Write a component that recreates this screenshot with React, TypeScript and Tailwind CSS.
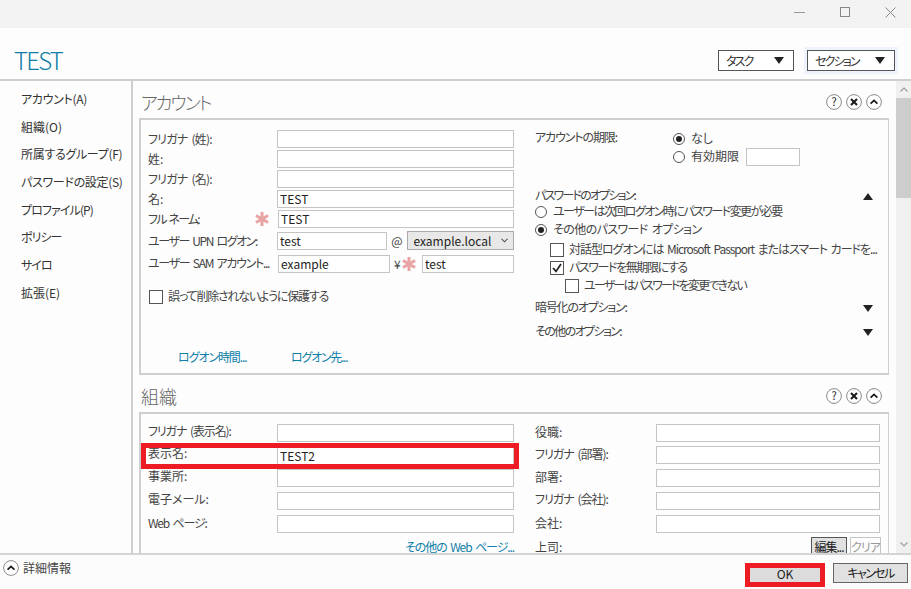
import { ReactNode } from 'react';

function Input({ value, className = '' }: { value?: string; className?: string }) {
  return (
    <div className={`h-[18px] border border-[#c4c4c4] bg-white pl-[2px] text-[12px] leading-[15px] text-[#222] ${className}`}>
      {value}
    </div>
  );
}

function Field({ label, value, star, track = '', className = '' }: { label: string; value?: string; star?: boolean; track?: string; className?: string }) {
  return (
    <div className={`flex h-[18px] items-center ${className}`}>
      <div className={`w-[129px] shrink-0 text-[12px] leading-[18px] whitespace-nowrap ${track}`}>{label}</div>
      {star ? <Star className="-ml-[22px] mr-[9px]" /> : null}
      <Input value={value} className="flex-1" />
    </div>
  );
}

function Star({ className = '' }: { className?: string }) {
  return (
    <svg viewBox="0 0 14 14" className={`h-[14px] w-[14px] shrink-0 ${className}`}>
      <g stroke="#e9a3a3" strokeWidth="3" strokeLinecap="butt">
        <path d="M7 0v14M1 3.5l12 7M13 3.5l-12 7" />
      </g>
    </svg>
  );
}

function Round({ children }: { children: ReactNode }) {
  return (
    <svg viewBox="0 0 16 16" className="h-[16px] w-[16px]">
      <circle cx="8" cy="8" r="7.4" fill="#fff" stroke="#8a8a8a" strokeWidth="1" />
      {children}
    </svg>
  );
}

function UpIcon() {
  return (
    <Round>
      <path d="M4.6 9.6 8 6.4l3.4 3.2" fill="none" stroke="#1a1a1a" strokeWidth="1.8" />
    </Round>
  );
}

function SectionHead({ title, track = '' }: { title: string; track?: string }) {
  return (
    <div className="flex h-[37px] items-center justify-between pt-[5px] pr-[7px] pl-[2px]">
      <div className={`text-[18px] leading-[24px] font-light text-[#666] ${track}`}>{title}</div>
      <div className="flex gap-[4px]">
        <Round>
          <text x="8" y="12" textAnchor="middle" fontSize="11" fill="#222">?</text>
        </Round>
        <Round>
          <path d="M5 5l6 6M11 5l-6 6" stroke="#1a1a1a" strokeWidth="2" />
        </Round>
        <UpIcon />
      </div>
    </div>
  );
}

function Radio({ on, label, track = '', className = '' }: { on?: boolean; label: string; track?: string; className?: string }) {
  return (
    <div className={`flex h-[18px] items-center ${className}`}>
      <div className="flex h-[12px] w-[12px] shrink-0 items-center justify-center rounded-full border border-[#555] bg-white">
        {on ? <div className="h-[6px] w-[6px] rounded-full bg-[#222]" /> : null}
      </div>
      <span className={`ml-[6px] pb-[2px] text-[12px] leading-[18px] whitespace-nowrap ${track}`}>{label}</span>
    </div>
  );
}

function Check({ on, label, track = '', className = '' }: { on?: boolean; label: string; track?: string; className?: string }) {
  return (
    <div className={`flex h-[18px] items-center ${className}`}>
      <div className="h-[14px] w-[14px] shrink-0 border border-[#555] bg-white">
        {on ? (
          <svg viewBox="0 0 12 12" className="h-[12px] w-[12px]">
            <path d="M2 6l3 3.4L10 2" fill="none" stroke="#222" strokeWidth="1.8" />
          </svg>
        ) : null}
      </div>
      <span className={`ml-[5px] pb-[2px] text-[12px] leading-[18px] whitespace-nowrap ${track}`}>{label}</span>
    </div>
  );
}

function Tri({ up }: { up?: boolean }) {
  return (
    <svg viewBox="0 0 10 7" className="h-[7px] w-[10px]">
      <path d={up ? 'M0 7h10L5 0z' : 'M0 0h10L5 7z'} fill="#222" />
    </svg>
  );
}

function OptionRow({ label, up, track = '', className = '' }: { label: string; up?: boolean; track?: string; className?: string }) {
  return (
    <div className={`flex h-[18px] items-center justify-between text-[12px] leading-[18px] ${className}`}>
      <span className={`pb-[3px] ${track}`}>{label}</span>
      <Tri up={up} />
    </div>
  );
}

function HeadButton({ label, className = '' }: { label: string; className?: string }) {
  return (
    <div className={`flex h-[21px] items-center justify-between border border-[#555] bg-white pr-[9px] pl-[7px] text-[12px] text-[#333] ${className}`}>
      <span className="tracking-[-1.8px]">{label}</span>
      <Tri />
    </div>
  );
}

const navItems = [
  { label: 'アカウント(A)', track: 'tracking-[-0.3px]' },
  { label: '組織(O)', track: '' },
  { label: '所属するグループ(F)', track: 'tracking-[-0.3px]' },
  { label: 'パスワードの設定(S)', track: 'tracking-[-0.3px]' },
  { label: 'プロファイル(P)', track: 'tracking-[-0.9px]' },
  { label: 'ポリシー', track: 'tracking-[-1px]' },
  { label: 'サイロ', track: 'tracking-[-1px]' },
  { label: '拡張(E)', track: '' },
];

export default function App() {
  return (
    <div className="flex h-[589px] w-[911px] flex-col overflow-hidden bg-[#fdfdfd] font-['Noto_Sans_CJK_JP','Liberation_Sans',sans-serif] text-[#444] [font-feature-settings:'palt'] [word-spacing:2px]">
      <div className="flex h-[28px] shrink-0 items-center justify-end gap-[35px] bg-[#f3f3f3] pr-[15px] pb-[4px]">
        <div className="h-px w-[11px] bg-[#999]" />
        <div className="h-[10px] w-[10px] border border-[#888]" />
        <svg viewBox="0 0 11 11" className="h-[11px] w-[11px]">
          <path d="M.5.5l10 10M10.5.5l-10 10" stroke="#888" strokeWidth="1" />
        </svg>
      </div>

      <div className="flex h-[53px] shrink-0 items-end justify-between border-b-2 border-[#cfcfcf] pr-[16px] pb-[8px] pl-[14px]">
        <div className="-mb-[5px] text-[24px] leading-[32px] font-light tracking-[-1.8px] text-[#0f7fa8]">TEST</div>
        <div className="flex gap-[13px]">
          <HeadButton label="タスク" className="w-[76px]" />
          <HeadButton label="セクション" className="w-[88px] shadow-[0_0_0_3px_#eef3fd]" />
        </div>
      </div>

      <div className="flex min-h-0 flex-1">
        <div className="w-[133px] shrink-0 border-r-2 border-[#cfcfcf] pt-[4px] pl-[21px]">
          {navItems.map((item) => (
            <div key={item.label} className={`h-[27.7px] text-[12px] leading-[27px] whitespace-nowrap text-[#333] ${item.track}`}>
              {item.label}
            </div>
          ))}
        </div>

        <div className="min-w-0 flex-1 overflow-hidden pl-[6px]">
          <SectionHead title="アカウント" track="tracking-[-2px]" />
          <div className="relative flex h-[257px] w-[751px] border-2 border-[#cfcfcf] pt-[10px] pl-[7px]">
            <div className="w-[366px] shrink-0">
              <div className="flex flex-col gap-[2px]">
                <Field label="フリガナ (姓):" track="tracking-[-0.8px]" />
                <Field label="姓:" />
                <Field label="フリガナ (名):" track="tracking-[-0.8px]" />
                <Field label="名:" value="TEST" />
                <Field label="フル ネーム:" value="TEST" star track="tracking-[-1.8px]" />
              </div>
              <div className="mt-[3px] flex h-[19px] items-center">
                <div className="w-[129px] shrink-0 text-[12px] whitespace-nowrap tracking-[-1.4px]">ユーザー UPN ログオン:</div>
                <Input value="test" className="w-[110px]" />
                <div className="w-[21px] text-center text-[12px]">@</div>
                <div className="flex h-[19px] w-[107px] items-center justify-between border border-[#aaa] bg-[#e8e8e8] pr-[5px] pl-[5px] text-[12px] text-[#222]">
                  <span>example.local</span>
                  <svg viewBox="0 0 8 5" className="h-[5px] w-[7px]">
                    <path d="M.5.5 4 4 7.5.5" fill="none" stroke="#444" strokeWidth="1.2" />
                  </svg>
                </div>
              </div>
              <div className="mt-[5px] flex h-[18px] items-center">
                <div className="w-[130px] shrink-0 pb-[2px] text-[12px] whitespace-nowrap tracking-[-1.3px]">ユーザー SAM アカウント...</div>
                <Input value="example" className="w-[112px]" />
                <div className="ml-[4px] w-[8px] text-[12px]">¥</div>
                <Star />
                <Input value="test" className="ml-[6px] flex-1" />
              </div>
              <Check label="誤って削除されないように保護する" track="tracking-[-1.2px]" className="mt-[15px] ml-[1px]" />
              <div className="mt-[42px] flex pl-[30px] text-[12px] leading-[18px] text-[#0f7fa8]">
                <span className="w-[113px] tracking-[-1.1px]">ログオン時間...</span>
                <span className="tracking-[-1.25px]">ログオン先...</span>
              </div>
            </div>

            <div className="ml-[21px] w-[338px] shrink-0">
              <div className="flex">
                <div className="-mt-[2px] w-[138px] shrink-0 text-[12px] leading-[18px] tracking-[-1.1px]">アカウントの期限:</div>
                <div>
                  <Radio on label="なし" className="h-[16px]" />
                  <div className="flex items-center">
                    <Radio label="有効期限" />
                    <Input className="ml-[7px] w-[54px]" />
                  </div>
                </div>
              </div>
              <OptionRow label="パスワードのオプション:" up track="tracking-[-1.8px]" className="mt-[21px]" />
              <Radio label="ユーザーは次回ログオン時にパスワード変更が必要" track="tracking-[-1.55px]" className="-mt-[2px]" />
              <Radio on label="その他のパスワード オプション" track="tracking-[-0.6px]" />
              <Check label="対話型ログオンには Microsoft Passport またはスマート カードを..." track="tracking-[-1.05px]" className="mt-[2px] ml-[15px]" />
              <Check on label="パスワードを無期限にする" track="tracking-[-1.4px]" className="ml-[15px]" />
              <Check label="ユーザーはパスワードを変更できない" track="tracking-[-1.8px]" className="ml-[30px]" />
              <OptionRow label="暗号化のオプション:" track="tracking-[-1.2px]" className="mt-[4px]" />
              <OptionRow label="その他のオプション:" track="tracking-[-1.6px]" className="mt-[6px]" />
            </div>
          </div>

          <SectionHead title="組織" />
          <div className="flex w-[751px] border-2 border-[#cfcfcf] pt-[10px] pl-[7px]">
            <div className="w-[366px] shrink-0">
              <Field label="フリガナ (表示名):" track="pb-[4px] tracking-[-1.1px]" />
              <div className="relative mt-[5px]">
                <Field label="表示名:" value="TEST2" track="pb-[6px]" />
                <div className="absolute -top-[4px] -right-[5px] -bottom-[4px] -left-[7px] border-[5px] border-[#ed1c24]" />
              </div>
              <Field label="事業所:" track="pb-[4px]" className="mt-[4px]" />
              <Field label="電子メール:" track="pb-[4px]" className="mt-[5px]" />
              <Field label="Web ページ:" track="pb-[2px] tracking-[-1.2px]" className="mt-[5px]" />
              <div className="mt-[5px] text-right text-[12px] leading-[18px] whitespace-nowrap tracking-[-1.1px] text-[#0f7fa8]">その他の Web ページ...</div>
            </div>
            <div className="ml-[21px] w-[345px] shrink-0">
              <Field label="役職:" track="pb-[2px]" className="[&>div:first-child]:w-[121px]" />
              <Field label="フリガナ (部署):" track="pb-[2px] tracking-[-1px]" className="mt-[4px] [&>div:first-child]:w-[121px]" />
              <Field label="部署:" track="pb-[2px]" className="mt-[5px] [&>div:first-child]:w-[121px]" />
              <Field label="フリガナ (会社):" track="pb-[4px] tracking-[-1px]" className="mt-[5px] [&>div:first-child]:w-[121px]" />
              <Field label="会社:" track="pb-[2px]" className="mt-[5px] [&>div:first-child]:w-[121px]" />
              <div className="mt-[4px] -mr-[1px] flex h-[20px] items-center text-[12px]">
                <span className="flex-1">上司:</span>
                <div className="h-[20px] w-[36px] border border-[#555] bg-[#e1e1e1] text-center leading-[18px] tracking-[-1px] whitespace-nowrap text-[#222]">編集...</div>
                <div className="ml-[3px] h-[20px] w-[31px] border border-[#c4c4c4] text-center leading-[18px] tracking-[-1px] whitespace-nowrap text-[#999]">クリア</div>
              </div>
            </div>
          </div>
        </div>

        <div className="ml-[7px] flex w-[15px] shrink-0 flex-col items-center bg-[#f0f0f0]">
          <svg viewBox="0 0 8 5" className="mt-[6px] h-[5px] w-[8px] shrink-0">
            <path d="M.5 4.5 4 1l3.5 3.5" fill="none" stroke="#a0a0a0" strokeWidth="1.2" />
          </svg>
          <div className="mt-[6px] h-[100px] w-full bg-[#cdcdcd]" />
          <svg viewBox="0 0 8 5" className="mt-auto mb-[6px] h-[5px] w-[8px] shrink-0">
            <path d="M.5.5 4 4 7.5.5" fill="none" stroke="#a0a0a0" strokeWidth="1.2" />
          </svg>
        </div>
      </div>

      <div className="flex h-[36px] shrink-0 justify-between border-t-2 border-[#d4d4d4] bg-[#fcfcfc] pr-[3px] pl-[3px]">
        <div className="flex h-[26px] items-center gap-[4px] text-[12px] text-[#444]">
          <UpIcon />
          <span>詳細情報</span>
        </div>
        <div className="flex gap-[8px] pt-[8px]">
          <div className="flex h-[24px] w-[80px] items-center justify-center border-[5px] border-[#ed1c24] bg-[#dcdcdc] pb-[2px] text-[12px] text-[#222]">OK</div>
          <div className="flex h-[20px] w-[75px] items-center justify-center border border-[#666] bg-[#e1e1e1] text-[12px] tracking-[-1.6px] text-[#222]">キャンセル</div>
        </div>
      </div>
    </div>
  );
}
